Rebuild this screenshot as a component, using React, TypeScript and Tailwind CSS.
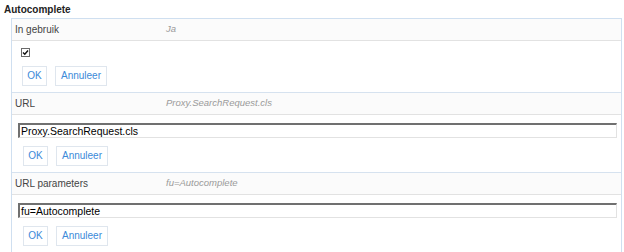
import React from "react";

const font = { fontFamily: '"Liberation Sans", Arial, sans-serif' };

function Buttons() {
  return (
    <div className="flex gap-[8px] pl-[5px] mt-[8px]">
      <button className="w-[25px] h-[20px] border border-[#dfe6ee] bg-white text-[10px] text-[#3c8ad8] leading-none flex items-center justify-center">
        OK
      </button>
      <button className="w-[52px] h-[20px] border border-[#dfe6ee] bg-white text-[10px] text-[#3c8ad8] leading-none flex items-center justify-center">
        Annuleer
      </button>
    </div>
  );
}

function Header({ label, value }: { label: string; value: string }) {
  return (
    <div className="h-[22px] flex items-center bg-[#fbfbfb] border-b border-[#e2e2e2] pl-[3px]">
      <div className="w-[151px] text-[10px] text-[#444]">{label}</div>
      <div className="text-[9.5px] italic text-[#9a9a9a]">{value}</div>
    </div>
  );
}

function TextInput({ value }: { value: string }) {
  return (
    <div className="h-[15px] mr-[4px] border-t-2 border-l-2 border-t-[#707070] border-l-[#707070] border-r border-b border-r-[#e2e2e2] border-b-[#e2e2e2] bg-white flex items-center pl-[1px] text-[10.5px] text-black leading-none">
      {value}
    </div>
  );
}

export default function App() {
  return (
    <div className="w-[624px] h-[252px] overflow-hidden bg-white" style={font}>
      <div className="h-[18px] pl-[4px] pt-[4px] text-[10px] font-bold text-[#222] leading-[12px]">
        Autocomplete
      </div>
      <div className="ml-[11px] w-[611px] border border-[#cfdff0]">
        {/* Section 1 */}
        <div className="border-b border-[#d6e2ef]">
          <Header label="In gebruik" value="Ja" />
          <div className="pl-[8px] pt-[7px] pb-[6px]">
            <div className="h-[10px] pl-[1px]">
              <svg width="9" height="9" viewBox="0 0 9 9">
                <rect x="0.5" y="0.5" width="8" height="8" fill="#fff" stroke="#6a6a6a" />
                <path d="M2 4.5 L3.8 6.3 L7 2.5" fill="none" stroke="#111" strokeWidth="1.4" />
              </svg>
            </div>
            <div className="-ml-[3px]">
              <Buttons />
            </div>
          </div>
        </div>
        {/* Section 2 */}
        <div className="border-b border-[#d6e2ef]">
          <Header label="URL" value="Proxy.SearchRequest.cls" />
          <div className="pl-[6px] pt-[8px] pb-[6px]">
            <TextInput value="Proxy.SearchRequest.cls" />
            <Buttons />
          </div>
        </div>
        {/* Section 3 */}
        <div className="border-b border-[#d6e2ef]">
          <Header label="URL parameters" value="fu=Autocomplete" />
          <div className="pl-[6px] pt-[8px] pb-[6px]">
            <TextInput value="fu=Autocomplete" />
            <Buttons />
          </div>
        </div>
      </div>
    </div>
  );
}
